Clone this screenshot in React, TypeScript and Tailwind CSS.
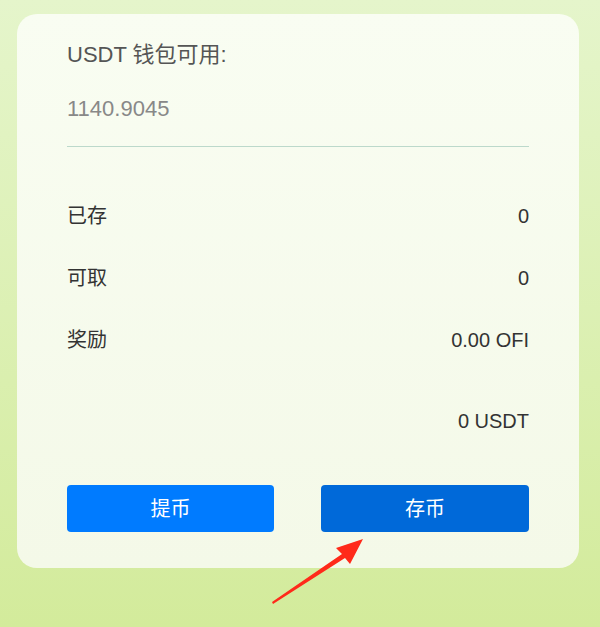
import React from "react";

export default function App() {
  const font = { fontFamily: '"Liberation Sans", Arial, "Noto Sans CJK SC", sans-serif' };
  return (
    <div
      className="relative w-[600px] h-[627px] overflow-hidden bg-gradient-to-b from-[#e5f5cb] to-[#d3eb9b] pt-[14px] px-[17px]"
      style={font}
    >
      <div className="w-[562px] h-[554px] rounded-[20px] bg-gradient-to-b from-[#f9fdf2] to-[#f4f9e8] px-[50px] pt-[28px] flex flex-col">
        <div className="text-[22px] leading-[26px] text-[#555555]">USDT 钱包可用:</div>
        <div className="mt-[28px] text-[22px] leading-[26px] text-[#888888]">1140.9045</div>
        <div className="mt-[24px] h-px bg-[#bcd9cb]" />
        <div className="mt-[57px] flex flex-col gap-[38px] text-[20px] leading-[24px] text-[#333333]">
          <div className="flex justify-between"><span>已存</span><span>0</span></div>
          <div className="flex justify-between"><span>可取</span><span>0</span></div>
          <div className="flex justify-between"><span>奖励</span><span>0.00 OFI</span></div>
        </div>
        <div className="mt-[57px] text-right text-[20px] leading-[24px] text-[#333333]">0 USDT</div>
        <div className="mt-[52px] flex justify-between">
          <button className="w-[207px] h-[47px] rounded-[4px] bg-[#007bff] text-white text-[20px]">提币</button>
          <button className="w-[208px] h-[47px] rounded-[4px] bg-[#0069d9] text-white text-[20px]">存币</button>
        </div>
      </div>
      <svg className="absolute left-[268px] top-[534px]" width="100" height="72" viewBox="0 0 100 72">
        <polygon points="4,68 74,20 68,14 95,5 82,30 77,24 5,70" fill="#ff2a1a" />
      </svg>
    </div>
  );
}
